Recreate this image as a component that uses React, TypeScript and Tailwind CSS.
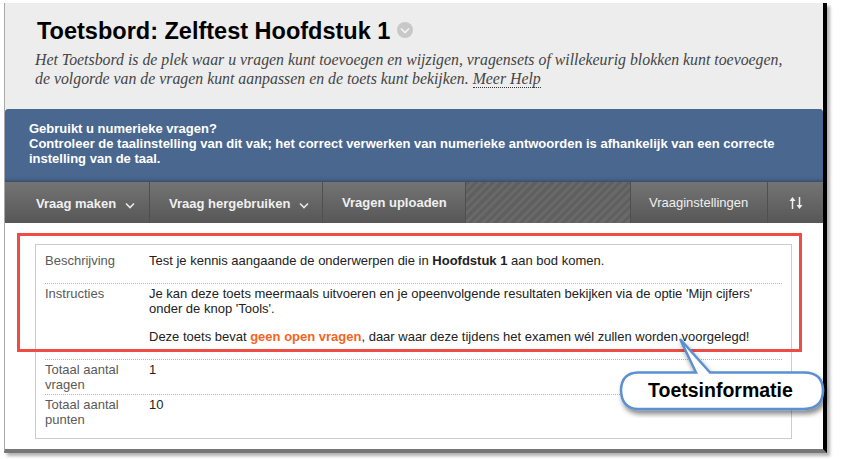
const sans = "font-['Liberation_Sans',Arial,sans-serif]";

function Chevron() {
  return (
    <svg width="10" height="7" viewBox="0 0 10 7" className="ml-[9px] mt-[2px]">
      <path d="M1 1.5 L5 5.5 L9 1.5" fill="none" stroke="#e8e8e8" strokeWidth="1.6" />
    </svg>
  );
}

function ToolButton({ label, className, chevron, bold = true }: { label: string; className: string; chevron?: boolean; bold?: boolean }) {
  return (
    <div className={`flex h-full items-center border-r border-[#4f4f4f] text-[13px] text-[#f0f0f0] ${className} ${bold ? "font-bold" : ""}`}>
      {label}
      {chevron && <Chevron />}
    </div>
  );
}

function InfoRow({ label, children, className }: { label: React.ReactNode; children: React.ReactNode; className: string }) {
  return (
    <div className={`flex border-b border-dotted border-[#b5b5b5] ${className}`}>
      <div className="w-[104px] shrink-0 text-[#5a5a5a]">{label}</div>
      <div className="flex-1 text-[#222]">{children}</div>
    </div>
  );
}

function Callout() {
  return (
    <div className="absolute left-[618px] top-[336px] h-[82px] w-[212px]">
      <svg width="212" height="82" viewBox="0 0 212 82" className="absolute left-0 top-0">
        <defs>
          <filter id="callout-shadow" x="-10%" y="-10%" width="125%" height="135%">
            <feDropShadow dx="2" dy="4" stdDeviation="2.5" floodColor="#000" floodOpacity="0.45" />
          </filter>
        </defs>
        <path
          d="M20 36.5 L78 36.5 L62 3 L92 36.5 L186 36.5 Q204.5 36.5 205 54 Q205 72.5 186 73 L20 73 Q3.5 72.5 3 54 Q3.5 37 20 36.5 Z"
          fill="#fff"
          stroke="#5b90d0"
          strokeWidth="2.5"
          filter="url(#callout-shadow)"
        />
      </svg>
      <div className={`absolute left-[30px] top-[43px] text-[19.5px] font-bold leading-[22px] text-black ${sans}`}>Toetsinformatie</div>
    </div>
  );
}

export default function App() {
  return (
    <div className={`relative h-[459px] w-[842px] overflow-hidden bg-white pl-[4px] pt-[3px] ${sans}`}>
      <div className="h-[450px] w-[823px] border-b-[4px] border-l border-r-[4px] border-b-[#777] border-l-[#a8a8a8] border-r-black shadow-[3px_3px_3px_rgba(0,0,0,0.3)]">
        <header className="h-[106px] bg-[#ededed] pl-[30px] pt-[11px]">
          <h1 className="flex items-center pl-[2px] text-[23.5px] font-bold leading-[34px] text-black">
            Toetsbord: Zelftest Hoofdstuk 1
            <span className="-mt-[2px] ml-[7px] flex h-[16px] w-[16px] items-center justify-center rounded-full bg-[#c8c8c8]">
              <svg width="10" height="7" viewBox="0 0 10 7">
                <path d="M1 1.5 L5 5.5 L9 1.5" fill="none" stroke="#f4f4f4" strokeWidth="1.6" />
              </svg>
            </span>
          </h1>
          <p className="mt-[2px] font-['Liberation_Serif',serif] text-[15.84px] italic leading-[19px] text-[#444]">
            Het Toetsbord is de plek waar u vragen kunt toevoegen en wijzigen, vragensets of willekeurig blokken kunt toevoegen,
            <br />
            de volgorde van de vragen kunt aanpassen en de toets kunt bekijken. <span className="border-b border-dotted border-[#333]">Meer Help</span>
          </p>
        </header>

        <div className="h-[73px] rounded-t-[3px] bg-[#4a688f] pl-[24px] pt-[12px] text-[13px] font-bold leading-[15px] text-white shadow-[inset_0_-4px_4px_-3px_rgba(0,0,0,0.35)]">
          Gebruikt u numerieke vragen?
          <br />
          Controleer de taalinstelling van dit vak; het correct verwerken van numerieke antwoorden is afhankelijk van een correcte
          <br />
          instelling van de taal.
        </div>

        <div className="flex h-[41px] bg-gradient-to-b from-[#747474] to-[#575757]">
          <ToolButton label="Vraag maken" className="w-[145px] pl-[31px] pt-[3px]" chevron />
          <ToolButton label="Vraag hergebruiken" className="w-[173px] pl-[19px] pt-[3px]" chevron />
          <ToolButton label="Vragen uploaden" className="w-[143px] pl-[19px]" />
          <div className="h-full w-[165px] border-r border-[#4f4f4f] bg-[repeating-linear-gradient(135deg,#5f5f5f_0px,#5f5f5f_3px,#696969_3px,#696969_6px)]" />
          <ToolButton label="Vraaginstellingen" className="w-[137px] pl-[18px]" bold={false} />
          <div className="flex h-full flex-1 items-center justify-center">
            <svg width="14" height="12" viewBox="0 0 14 12">
              <path d="M3.5 12 L3.5 3 M10.5 0 L10.5 9" fill="none" stroke="#f0f0f0" strokeWidth="1.5" />
              <path d="M0.5 4 L3.5 0 L6.5 4 Z M7.5 8 L10.5 12 L13.5 8 Z" fill="#f0f0f0" />
            </svg>
          </div>
        </div>

        <div className="pl-[30px] pt-[21px]">
          <div className="h-[195px] w-[757px] border border-[#cccccc] px-[9px] text-[13px] leading-[15px]">
            <InfoRow label="Beschrijving" className="h-[39px] pt-[8px]">
              Test je kennis aangaande de onderwerpen die in <b>Hoofdstuk 1</b> aan bod komen.
            </InfoRow>
            <InfoRow label="Instructies" className="h-[76px] pt-[2px]">
              <p>Je kan deze toets meermaals uitvoeren en je opeenvolgende resultaten bekijken via de optie 'Mijn cijfers' onder de knop 'Tools'.</p>
              <p className="mt-[13px]">
                Deze toets bevat <b className="text-[#f26522]">geen open vragen</b>, daar waar deze tijdens het examen wél zullen worden voorgelegd!
              </p>
            </InfoRow>
            <InfoRow label={<>Totaal aantal<br />vragen</>} className="h-[35px] pt-[2px]">
              1
            </InfoRow>
            <div className="flex pt-[2px]">
              <div className="w-[104px] shrink-0 text-[#5a5a5a]">
                Totaal aantal
                <br />
                punten
              </div>
              <div className="flex-1 text-[#222]">10</div>
            </div>
          </div>
        </div>
      </div>

      <div className="absolute left-[17px] top-[233px] h-[119px] w-[785px] border-[3px] border-[#ef4c45]" />
      <Callout />
    </div>
  );
}
